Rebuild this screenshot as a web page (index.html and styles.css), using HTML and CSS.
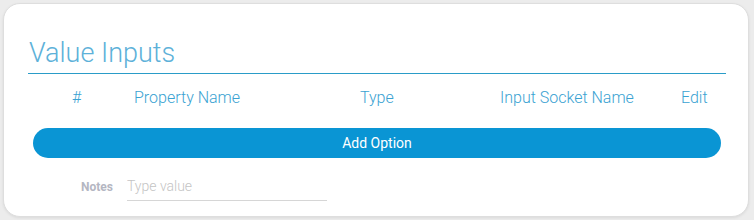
FILE: index.html
```html
<!DOCTYPE html>
<html lang="en">
<head>
    <meta charset="UTF-8">
    <title>Value Inputs</title>
    <link rel="stylesheet" href="styles.css">
</head>
<body>
    <div class="card">
        <h2 class="section-title">Value Inputs</h2>

        <div class="table-head">
            <span class="col-index">#</span>
            <span>Property Name</span>
            <span>Type</span>
            <span>Input Socket Name</span>
            <span>Edit</span>
        </div>

        <button class="add-btn">Add Option</button>

        <div class="notes-row">
            <label class="notes-label" for="notes">Notes</label>
            <input class="notes-input" id="notes" type="text" placeholder="Type value">
        </div>
    </div>
</body>
</html>
```

FILE: styles.css
```css
:root {
    --primary: #0a95d4;
    --heading: #5db1d9;
    --head-text: #3aa2d2;
    --line: #2a9cc8;
    --muted: #b4b6c2;
}

* {
    box-sizing: border-box;
    margin: 0;
    padding: 0;
    font-family: Roboto, 'Liberation Sans', sans-serif;
}

body {
    background-color: #ececec;
    padding: 3px 5px 3px 3px;
}

.card {
    background: white;
    border: 1px solid #dedede;
    border-radius: 17px;
    box-shadow: 0 1px 3px rgba(0, 0, 0, 0.08);
    height: 214px;
    padding: 34px 22px 0 24px;
}

.section-title {
    font-size: 27px;
    font-weight: 300;
    color: var(--heading);
    line-height: 30px;
    padding-left: 1px;
    padding-bottom: 5px;
    border-bottom: 1px solid var(--line);
}

.table-head {
    display: grid;
    grid-template-columns: 101px 226px 140px 181px 40px;
    margin: 0 5px;
    padding-top: 15px;
    height: 54px;
    font-size: 16px;
    font-weight: 300;
    color: var(--head-text);
    line-height: 18px;
}

.col-index {
    padding-left: 39px;
}

.add-btn {
    display: block;
    width: calc(100% - 10px);
    margin: 0 5px;
    height: 30px;
    border: none;
    border-radius: 15px;
    background-color: var(--primary);
    color: white;
    font-size: 14px;
    cursor: pointer;
}

.notes-row {
    display: flex;
    align-items: center;
    gap: 14px;
    margin-top: 14px;
    padding-left: 53px;
}

.notes-label {
    font-size: 12px;
    font-weight: 700;
    color: var(--muted);
}

.notes-input {
    width: 200px;
    height: 29px;
    border: none;
    border-bottom: 1px solid #d6d6d6;
    font-size: 14px;
    font-weight: 300;
    outline: none;
}

.notes-input::placeholder {
    color: #c4c4c4;
}
```
